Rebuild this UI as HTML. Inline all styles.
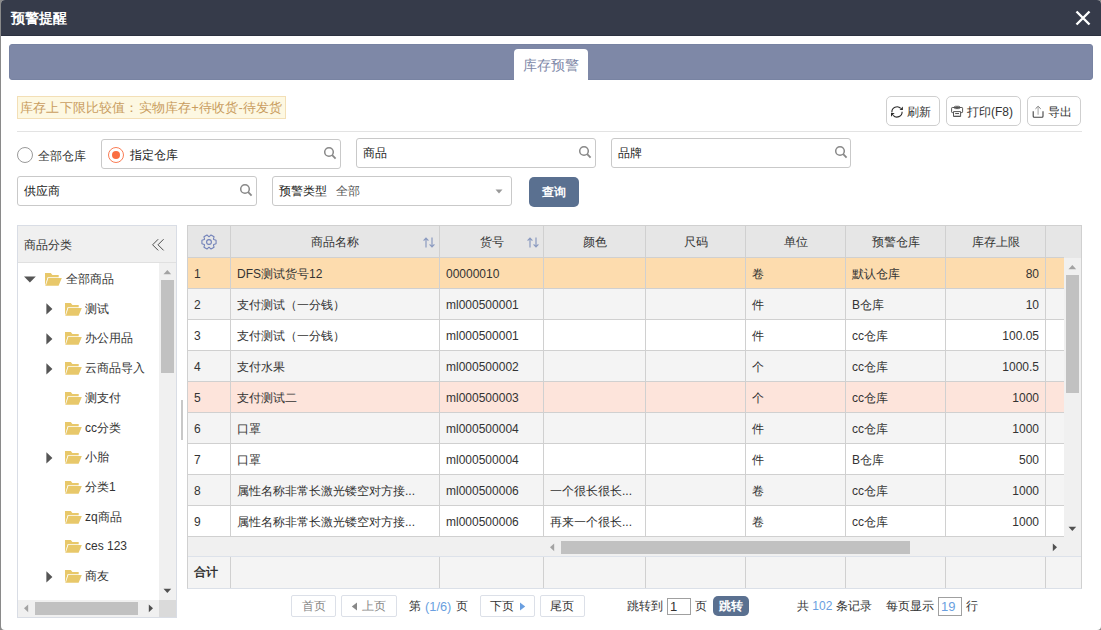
<!DOCTYPE html>
<html><head><meta charset="utf-8">
<style>
*{box-sizing:border-box;margin:0;padding:0}
html,body{width:1101px;height:630px;overflow:hidden}
body{position:relative;background:#8a8a8a;font-family:"Liberation Sans",sans-serif;font-size:12px;color:#333}
.a{position:absolute}
#dlg{left:1px;top:0;width:1100px;height:630px;background:#fff;border-radius:4px}
#title{left:1px;top:0;width:1100px;height:36px;background:#363b4a;border-radius:4px 4px 0 0;border-bottom:1px solid #2c3140}
#title span{position:absolute;left:10px;top:8px;font-size:14px;font-weight:bold;color:#fff;line-height:20px}
#band{left:9px;top:44px;width:1084px;height:36px;background:#7e88a7;border-radius:3px;border:1px solid #7883a2}
#tab{left:514px;top:49px;width:74px;height:31px;background:#fff;border-radius:4px 4px 0 0;color:#7e88a7;font-size:14px;line-height:33px;text-align:center}
#notice{left:17px;top:96px;width:269px;height:23px;background:#fdf8e2;border:1px solid #f3dfb6;color:#c99d60;font-size:13px;line-height:22px;letter-spacing:0.17px;padding-left:2px;white-space:nowrap}
.btn{height:30px;border:1px solid #cfcfcf;border-radius:5px;background:#fff;font-size:12px;color:#333;line-height:28px;white-space:nowrap}
#hr{left:17px;top:131px;width:1065px;height:1px;background:#e3e3e3}
.inp{border:1px solid #c9c9c9;border-radius:3px;background:#fff;height:30px;font-size:12px;line-height:29px;color:#222;padding-left:6px;white-space:nowrap}
.radio{width:16px;height:16px;border-radius:50%;border:1px solid #9a9a9a;background:#fff}
.srch{position:absolute;width:14px;height:14px}
.pb{height:22px;border:1px solid #dce0e8;border-radius:2px;background:#fff}
.qbtn{background:#5a7090;color:#fff;border-radius:5px;text-align:center;font-weight:bold}
</style></head><body>
<div id="dlg" class="a"></div>
<div id="title" class="a"><span>预警提醒</span>
<svg class="a" style="left:1074px;top:10px" width="16" height="16" viewBox="0 0 16 16"><path d="M1.5 1.5L14.5 14.5M14.5 1.5L1.5 14.5" stroke="#fff" stroke-width="2.4" fill="none"/></svg>
</div>
<div id="band" class="a"></div>
<div id="tab" class="a">库存预警</div>
<div id="notice" class="a">库存上下限比较值：实物库存+待收货-待发货</div>

<div class="a btn" style="left:886px;top:96px;width:54px;"></div>
<div class="a" style="left:907px;top:104px;font-size:12px;line-height:17px;color:#333">刷新</div>
<div class="a btn" style="left:946px;top:96px;width:75px;"></div>
<div class="a" style="left:967px;top:104px;font-size:12px;line-height:17px;color:#333">打印(F8)</div>
<div class="a btn" style="left:1027px;top:96px;width:54px;"></div>
<div class="a" style="left:1048px;top:104px;font-size:12px;line-height:17px;color:#333">导出</div>

<svg class="a" style="left:880px;top:96px" width="200" height="30" viewBox="880 96 200 30">
<path d="M891.92 112.34A5.1 5.1 0 0 1 900.79 108.49" stroke="#2a2a2a" stroke-width="1.1" fill="none"/>
<path d="M902.9 106.6V109.9H899.6Z" fill="#2a2a2a"/>
<path d="M902.10 111.72A5.1 5.1 0 0 1 893.21 115.31" stroke="#2a2a2a" stroke-width="1.1" fill="none"/>
<path d="M891 113V116.8L894.6 113Z" fill="#2a2a2a"/>
<rect x="954.3" y="106.3" width="5.6" height="2.3" rx="1.1" stroke="#555" stroke-width="1" fill="none"/>
<path d="M953.4 112.6H952.3Q951.6 112.6 951.6 111.9V108.2Q951.6 107.5 952.3 107.5H961.9Q962.6 107.5 962.6 108.2V111.9Q962.6 112.6 961.9 112.6H960.8" stroke="#555" stroke-width="1" fill="none"/>
<path d="M953.5 111.6H960.6V116.5H953.5Z" stroke="#555" stroke-width="1" fill="none"/>
<path d="M955.2 113.5H959" stroke="#444" stroke-width="0.9"/>
<path d="M954.2 115.4H960" stroke="#bbb" stroke-width="0.9"/>
<path d="M1033.2 111.2V116.2Q1033.2 117.2 1034.2 117.2H1042Q1043 117.2 1043 116.2V111.2" stroke="#444" stroke-width="1.1" fill="none"/>
<path d="M1038.1 107.2V114.8" stroke="#aaa" stroke-width="1.1"/>
<path d="M1035.5 108.8L1038.1 106.3L1040.7 108.8" stroke="#777" stroke-width="1" fill="none"/>
</svg>
<div id="hr" class="a"></div>

<!-- form -->
<div class="a radio" style="left:17px;top:147px"></div>
<div class="a" style="left:38px;top:148px;line-height:17px;color:#333">全部仓库</div>
<div class="a inp" style="left:101px;top:139px;width:240px"></div>
<div class="a radio" style="left:108px;top:147px;border-color:#fa7d55"><div class="a" style="left:3px;top:3px;width:8px;height:8px;border-radius:50%;background:#fa6e42"></div></div>
<div class="a" style="left:130px;top:147px;line-height:17px;color:#222">指定仓库</div>
<svg class="a srch" style="left:323px;top:146px" viewBox="0 0 14 14"><circle cx="6" cy="6" r="4.3" stroke="#888" stroke-width="1.5" fill="none"/><path d="M9.2 9.2L12.6 12.6" stroke="#888" stroke-width="1.8"/></svg>
<div class="a inp" style="left:356px;top:138px;width:240px">商品</div>
<svg class="a srch" style="left:578px;top:145px" viewBox="0 0 14 14"><circle cx="6" cy="6" r="4.3" stroke="#888" stroke-width="1.5" fill="none"/><path d="M9.2 9.2L12.6 12.6" stroke="#888" stroke-width="1.8"/></svg>
<div class="a inp" style="left:611px;top:138px;width:240px">品牌</div>
<svg class="a srch" style="left:834px;top:145px" viewBox="0 0 14 14"><circle cx="6" cy="6" r="4.3" stroke="#888" stroke-width="1.5" fill="none"/><path d="M9.2 9.2L12.6 12.6" stroke="#888" stroke-width="1.8"/></svg>
<div class="a inp" style="left:17px;top:176px;width:240px">供应商</div>
<svg class="a srch" style="left:239px;top:183px" viewBox="0 0 14 14"><circle cx="6" cy="6" r="4.3" stroke="#888" stroke-width="1.5" fill="none"/><path d="M9.2 9.2L12.6 12.6" stroke="#888" stroke-width="1.8"/></svg>
<div class="a inp" style="left:272px;top:176px;width:240px">预警类型<span style="color:#555;margin-left:9px">全部</span></div>
<svg class="a" style="left:495px;top:189px" width="8" height="5" viewBox="0 0 8 5"><path d="M0.5 0.5H7.5L4 4.5Z" fill="#999"/></svg>
<div class="a qbtn" style="left:529px;top:177px;width:50px;height:30px;line-height:30px;font-size:12px">查询</div>


<!-- table -->
<div class="a" style="left:187px;top:225px;width:895px;height:364px;border:1px solid #d0d0d0;border-bottom-color:#dbe0e8;background:#f4f4f4"></div>
<div class="a" style="left:188px;top:226px;width:893px;height:32px;background:#e6e6e6"></div>
<div class="a" style="left:188px;top:257px;width:876px;height:1px;background:#d0d0d0"></div>
<div class="a" style="left:1064px;top:258px;width:17px;height:298px;background:#f0f0f0"></div>
<div class="a" style="left:188px;top:537px;width:893px;height:20px;background:#f0f0f0;border-bottom:1px solid #dde2ea"></div>
<div class="a" style="left:188px;top:258px;width:876px;height:31px;background:#fddcae;border-bottom:1px solid #d0d0d0"></div>
<div class="a" style="left:194px;top:266px;line-height:17px;color:#333;white-space:nowrap">1</div>
<div class="a" style="left:237px;top:266px;line-height:17px;color:#333;white-space:nowrap">DFS测试货号12</div>
<div class="a" style="left:446px;top:266px;line-height:17px;color:#333;white-space:nowrap">00000010</div>
<div class="a" style="left:752px;top:266px;line-height:17px;color:#333;white-space:nowrap">卷</div>
<div class="a" style="left:852px;top:266px;line-height:17px;color:#333;white-space:nowrap">默认仓库</div>
<div class="a" style="left:946px;top:266px;width:93px;text-align:right;line-height:17px;color:#333">80</div>
<div class="a" style="left:188px;top:289px;width:876px;height:31px;background:#f4f4f4;border-bottom:1px solid #d0d0d0"></div>
<div class="a" style="left:194px;top:297px;line-height:17px;color:#333;white-space:nowrap">2</div>
<div class="a" style="left:237px;top:297px;line-height:17px;color:#333;white-space:nowrap">支付测试（一分钱）</div>
<div class="a" style="left:446px;top:297px;line-height:17px;color:#333;white-space:nowrap">ml000500001</div>
<div class="a" style="left:752px;top:297px;line-height:17px;color:#333;white-space:nowrap">件</div>
<div class="a" style="left:852px;top:297px;line-height:17px;color:#333;white-space:nowrap">B仓库</div>
<div class="a" style="left:946px;top:297px;width:93px;text-align:right;line-height:17px;color:#333">10</div>
<div class="a" style="left:188px;top:320px;width:876px;height:31px;background:#ffffff;border-bottom:1px solid #d0d0d0"></div>
<div class="a" style="left:194px;top:328px;line-height:17px;color:#333;white-space:nowrap">3</div>
<div class="a" style="left:237px;top:328px;line-height:17px;color:#333;white-space:nowrap">支付测试（一分钱）</div>
<div class="a" style="left:446px;top:328px;line-height:17px;color:#333;white-space:nowrap">ml000500001</div>
<div class="a" style="left:752px;top:328px;line-height:17px;color:#333;white-space:nowrap">件</div>
<div class="a" style="left:852px;top:328px;line-height:17px;color:#333;white-space:nowrap">cc仓库</div>
<div class="a" style="left:946px;top:328px;width:93px;text-align:right;line-height:17px;color:#333">100.05</div>
<div class="a" style="left:188px;top:351px;width:876px;height:31px;background:#f4f4f4;border-bottom:1px solid #d0d0d0"></div>
<div class="a" style="left:194px;top:359px;line-height:17px;color:#333;white-space:nowrap">4</div>
<div class="a" style="left:237px;top:359px;line-height:17px;color:#333;white-space:nowrap">支付水果</div>
<div class="a" style="left:446px;top:359px;line-height:17px;color:#333;white-space:nowrap">ml000500002</div>
<div class="a" style="left:752px;top:359px;line-height:17px;color:#333;white-space:nowrap">个</div>
<div class="a" style="left:852px;top:359px;line-height:17px;color:#333;white-space:nowrap">cc仓库</div>
<div class="a" style="left:946px;top:359px;width:93px;text-align:right;line-height:17px;color:#333">1000.5</div>
<div class="a" style="left:188px;top:382px;width:876px;height:31px;background:#fde4db;border-bottom:1px solid #d0d0d0"></div>
<div class="a" style="left:194px;top:390px;line-height:17px;color:#333;white-space:nowrap">5</div>
<div class="a" style="left:237px;top:390px;line-height:17px;color:#333;white-space:nowrap">支付测试二</div>
<div class="a" style="left:446px;top:390px;line-height:17px;color:#333;white-space:nowrap">ml000500003</div>
<div class="a" style="left:752px;top:390px;line-height:17px;color:#333;white-space:nowrap">个</div>
<div class="a" style="left:852px;top:390px;line-height:17px;color:#333;white-space:nowrap">cc仓库</div>
<div class="a" style="left:946px;top:390px;width:93px;text-align:right;line-height:17px;color:#333">1000</div>
<div class="a" style="left:188px;top:413px;width:876px;height:31px;background:#f4f4f4;border-bottom:1px solid #d0d0d0"></div>
<div class="a" style="left:194px;top:421px;line-height:17px;color:#333;white-space:nowrap">6</div>
<div class="a" style="left:237px;top:421px;line-height:17px;color:#333;white-space:nowrap">口罩</div>
<div class="a" style="left:446px;top:421px;line-height:17px;color:#333;white-space:nowrap">ml000500004</div>
<div class="a" style="left:752px;top:421px;line-height:17px;color:#333;white-space:nowrap">件</div>
<div class="a" style="left:852px;top:421px;line-height:17px;color:#333;white-space:nowrap">cc仓库</div>
<div class="a" style="left:946px;top:421px;width:93px;text-align:right;line-height:17px;color:#333">1000</div>
<div class="a" style="left:188px;top:444px;width:876px;height:31px;background:#ffffff;border-bottom:1px solid #d0d0d0"></div>
<div class="a" style="left:194px;top:452px;line-height:17px;color:#333;white-space:nowrap">7</div>
<div class="a" style="left:237px;top:452px;line-height:17px;color:#333;white-space:nowrap">口罩</div>
<div class="a" style="left:446px;top:452px;line-height:17px;color:#333;white-space:nowrap">ml000500004</div>
<div class="a" style="left:752px;top:452px;line-height:17px;color:#333;white-space:nowrap">件</div>
<div class="a" style="left:852px;top:452px;line-height:17px;color:#333;white-space:nowrap">B仓库</div>
<div class="a" style="left:946px;top:452px;width:93px;text-align:right;line-height:17px;color:#333">500</div>
<div class="a" style="left:188px;top:475px;width:876px;height:31px;background:#f4f4f4;border-bottom:1px solid #d0d0d0"></div>
<div class="a" style="left:194px;top:483px;line-height:17px;color:#333;white-space:nowrap">8</div>
<div class="a" style="left:237px;top:483px;line-height:17px;color:#333;white-space:nowrap">属性名称非常长激光镂空对方接...</div>
<div class="a" style="left:446px;top:483px;line-height:17px;color:#333;white-space:nowrap">ml000500006</div>
<div class="a" style="left:550px;top:483px;line-height:17px;color:#333;white-space:nowrap">一个很长很长...</div>
<div class="a" style="left:752px;top:483px;line-height:17px;color:#333;white-space:nowrap">卷</div>
<div class="a" style="left:852px;top:483px;line-height:17px;color:#333;white-space:nowrap">cc仓库</div>
<div class="a" style="left:946px;top:483px;width:93px;text-align:right;line-height:17px;color:#333">1000</div>
<div class="a" style="left:188px;top:506px;width:876px;height:31px;background:#ffffff;border-bottom:1px solid #d0d0d0"></div>
<div class="a" style="left:194px;top:514px;line-height:17px;color:#333;white-space:nowrap">9</div>
<div class="a" style="left:237px;top:514px;line-height:17px;color:#333;white-space:nowrap">属性名称非常长激光镂空对方接...</div>
<div class="a" style="left:446px;top:514px;line-height:17px;color:#333;white-space:nowrap">ml000500006</div>
<div class="a" style="left:550px;top:514px;line-height:17px;color:#333;white-space:nowrap">再来一个很长...</div>
<div class="a" style="left:752px;top:514px;line-height:17px;color:#333;white-space:nowrap">卷</div>
<div class="a" style="left:852px;top:514px;line-height:17px;color:#333;white-space:nowrap">cc仓库</div>
<div class="a" style="left:946px;top:514px;width:93px;text-align:right;line-height:17px;color:#333">1000</div>
<div class="a" style="left:230px;top:226px;width:1px;height:311px;background:#d0d0d0"></div>
<div class="a" style="left:230px;top:557px;width:1px;height:31px;background:#d0d0d0"></div>
<div class="a" style="left:439px;top:226px;width:1px;height:311px;background:#d0d0d0"></div>
<div class="a" style="left:439px;top:557px;width:1px;height:31px;background:#d0d0d0"></div>
<div class="a" style="left:543px;top:226px;width:1px;height:311px;background:#d0d0d0"></div>
<div class="a" style="left:543px;top:557px;width:1px;height:31px;background:#d0d0d0"></div>
<div class="a" style="left:645px;top:226px;width:1px;height:311px;background:#d0d0d0"></div>
<div class="a" style="left:645px;top:557px;width:1px;height:31px;background:#d0d0d0"></div>
<div class="a" style="left:745px;top:226px;width:1px;height:311px;background:#d0d0d0"></div>
<div class="a" style="left:745px;top:557px;width:1px;height:31px;background:#d0d0d0"></div>
<div class="a" style="left:845px;top:226px;width:1px;height:311px;background:#d0d0d0"></div>
<div class="a" style="left:845px;top:557px;width:1px;height:31px;background:#d0d0d0"></div>
<div class="a" style="left:945px;top:226px;width:1px;height:311px;background:#d0d0d0"></div>
<div class="a" style="left:945px;top:557px;width:1px;height:31px;background:#d0d0d0"></div>
<div class="a" style="left:1045px;top:226px;width:1px;height:311px;background:#d0d0d0"></div>
<div class="a" style="left:1045px;top:557px;width:1px;height:31px;background:#d0d0d0"></div>
<div class="a" style="left:231px;top:234px;width:208px;text-align:center;line-height:17px;color:#333">商品名称</div>
<div class="a" style="left:440px;top:234px;width:103px;text-align:center;line-height:17px;color:#333">货号</div>
<div class="a" style="left:544px;top:234px;width:101px;text-align:center;line-height:17px;color:#333">颜色</div>
<div class="a" style="left:646px;top:234px;width:99px;text-align:center;line-height:17px;color:#333">尺码</div>
<div class="a" style="left:746px;top:234px;width:99px;text-align:center;line-height:17px;color:#333">单位</div>
<div class="a" style="left:846px;top:234px;width:99px;text-align:center;line-height:17px;color:#333">预警仓库</div>
<div class="a" style="left:946px;top:234px;width:99px;text-align:center;line-height:17px;color:#333">库存上限</div>
<svg class="a" style="left:423px;top:237px" width="12" height="11" viewBox="0 0 12 11"><path d="M3 10.5V1.2M0.6 3.6L3 1.2L5.4 3.6" stroke="#8a9ac0" stroke-width="1.2" fill="none"/><path d="M9 0.5V9.8M6.6 7.4L9 9.8L11.4 7.4" stroke="#8a9ac0" stroke-width="1.2" fill="none"/></svg>
<svg class="a" style="left:527px;top:237px" width="12" height="11" viewBox="0 0 12 11"><path d="M3 10.5V1.2M0.6 3.6L3 1.2L5.4 3.6" stroke="#8a9ac0" stroke-width="1.2" fill="none"/><path d="M9 0.5V9.8M6.6 7.4L9 9.8L11.4 7.4" stroke="#8a9ac0" stroke-width="1.2" fill="none"/></svg>
<svg class="a" style="left:201px;top:234.4px" width="16" height="16" viewBox="0 0 16 16"><path d="M15.08 9.77 L15.08 6.23 L12.72 5.59 L12.44 5.11 L13.07 2.75 L10.01 0.98 L8.28 2.71 L7.72 2.71 L5.99 0.98 L2.93 2.75 L3.56 5.11 L3.28 5.59 L0.92 6.23 L0.92 9.77 L3.28 10.41 L3.56 10.89 L2.93 13.25 L5.99 15.02 L7.72 13.29 L8.28 13.29 L10.01 15.02 L13.07 13.25 L12.44 10.89 L12.72 10.41Z" stroke="#7080b8" stroke-width="1.05" fill="none" stroke-linejoin="round"/><circle cx="8" cy="8" r="2.4" stroke="#7080b8" stroke-width="1.1" fill="none"/></svg>
<svg class="a" style="left:1068px;top:264px" width="9" height="6" viewBox="0 0 9 6"><path d="M0.5 5.2H8.2L4.35 1Z" fill="#a3a3a3"/></svg>
<div class="a" style="left:1066px;top:275px;width:13px;height:118px;background:#c1c1c1"></div>
<svg class="a" style="left:1068px;top:526px" width="9" height="6" viewBox="0 0 9 6"><path d="M0.5 0.8H8.2L4.35 5Z" fill="#505050"/></svg>
<svg class="a" style="left:549px;top:543px" width="6" height="9" viewBox="0 0 6 9"><path d="M5.2 0.5V8.2L1 4.35Z" fill="#a3a3a3"/></svg>
<div class="a" style="left:561px;top:541px;width:349px;height:13px;background:#c1c1c1"></div>
<svg class="a" style="left:1052px;top:543px" width="6" height="9" viewBox="0 0 6 9"><path d="M0.8 0.5V8.2L5 4.35Z" fill="#505050"/></svg>
<div class="a" style="left:194px;top:564px;line-height:17px;color:#333;font-weight:bold">合计</div>
<!-- tree -->
<div class="a" style="left:17px;top:225px;width:160px;height:393px;border:1px solid #d9dde5;background:#fff"></div>
<div class="a" style="left:18px;top:226px;width:158px;height:37px;background:#f0f0f0;border-bottom:1px solid #e0e0e0"></div>
<div class="a" style="left:24px;top:237px;line-height:17px;color:#333">商品分类</div>
<svg class="a" style="left:151px;top:238px" width="14" height="14" viewBox="0 0 14 14"><path d="M7.2 1.2L1.6 6.8L7.2 12.4M12.6 1.2L7 6.8L12.6 12.4" stroke="#444" stroke-width="0.95" fill="none"/></svg>
<div class="a" style="left:159px;top:263px;width:17px;height:337px;background:#f0f0f0"></div>
<svg class="a" style="left:163px;top:269px" width="9" height="6" viewBox="0 0 9 6"><path d="M0.5 5.2H8.2L4.35 1Z" fill="#a3a3a3"/></svg>
<div class="a" style="left:161px;top:280px;width:13px;height:93px;background:#c1c1c1"></div>
<svg class="a" style="left:163px;top:588px" width="9" height="6" viewBox="0 0 9 6"><path d="M0.5 0.8H8.2L4.35 5Z" fill="#505050"/></svg>
<div class="a" style="left:18px;top:600px;width:141px;height:17px;background:#f0f0f0"></div>
<div class="a" style="left:159px;top:600px;width:17px;height:17px;background:#dadada"></div>
<svg class="a" style="left:23px;top:604px" width="6" height="9" viewBox="0 0 6 9"><path d="M5.2 0.5V8.2L1 4.35Z" fill="#a3a3a3"/></svg>
<div class="a" style="left:35px;top:602px;width:103px;height:13px;background:#c1c1c1"></div>
<svg class="a" style="left:148px;top:604px" width="6" height="9" viewBox="0 0 6 9"><path d="M0.8 0.5V8.2L5 4.35Z" fill="#505050"/></svg>
<svg class="a" style="left:24px;top:276.0px" width="12" height="7" viewBox="0 0 12 7"><path d="M0 0.5H11.8L5.9 6.5Z" fill="#555"/></svg>
<svg class="a" style="left:45.4px;top:273.0px" width="17" height="13" viewBox="0 0 17 13"><path d="M0 0H5.8L7.4 1.9H13.7V4.2H2.6L0.3 12.7H0Z" fill="#e8c86a"/><path d="M3.2 4.9H16.8L13.6 12.8H0.4Z" fill="#e8c86a"/><path d="M3.1 4.6L0.6 12.4" stroke="#fff" stroke-width="0.7" opacity="0.8"/></svg>
<div class="a" style="left:66px;top:271.0px;line-height:17px;color:#333;white-space:nowrap">全部商品</div>
<svg class="a" style="left:45.5px;top:303.2px" width="7" height="12" viewBox="0 0 7 12"><path d="M0.4 0.2V11.6L6.4 5.9Z" fill="#555"/></svg>
<svg class="a" style="left:64.7px;top:302.7px" width="17" height="13" viewBox="0 0 17 13"><path d="M0 0H5.8L7.4 1.9H13.7V4.2H2.6L0.3 12.7H0Z" fill="#e8c86a"/><path d="M3.2 4.9H16.8L13.6 12.8H0.4Z" fill="#e8c86a"/><path d="M3.1 4.6L0.6 12.4" stroke="#fff" stroke-width="0.7" opacity="0.8"/></svg>
<div class="a" style="left:85px;top:300.7px;line-height:17px;color:#333;white-space:nowrap">测试</div>
<svg class="a" style="left:45.5px;top:332.9px" width="7" height="12" viewBox="0 0 7 12"><path d="M0.4 0.2V11.6L6.4 5.9Z" fill="#555"/></svg>
<svg class="a" style="left:64.7px;top:332.4px" width="17" height="13" viewBox="0 0 17 13"><path d="M0 0H5.8L7.4 1.9H13.7V4.2H2.6L0.3 12.7H0Z" fill="#e8c86a"/><path d="M3.2 4.9H16.8L13.6 12.8H0.4Z" fill="#e8c86a"/><path d="M3.1 4.6L0.6 12.4" stroke="#fff" stroke-width="0.7" opacity="0.8"/></svg>
<div class="a" style="left:85px;top:330.4px;line-height:17px;color:#333;white-space:nowrap">办公用品</div>
<svg class="a" style="left:45.5px;top:362.6px" width="7" height="12" viewBox="0 0 7 12"><path d="M0.4 0.2V11.6L6.4 5.9Z" fill="#555"/></svg>
<svg class="a" style="left:64.7px;top:362.1px" width="17" height="13" viewBox="0 0 17 13"><path d="M0 0H5.8L7.4 1.9H13.7V4.2H2.6L0.3 12.7H0Z" fill="#e8c86a"/><path d="M3.2 4.9H16.8L13.6 12.8H0.4Z" fill="#e8c86a"/><path d="M3.1 4.6L0.6 12.4" stroke="#fff" stroke-width="0.7" opacity="0.8"/></svg>
<div class="a" style="left:85px;top:360.1px;line-height:17px;color:#333;white-space:nowrap">云商品导入</div>
<svg class="a" style="left:64.7px;top:391.8px" width="17" height="13" viewBox="0 0 17 13"><path d="M0 0H5.8L7.4 1.9H13.7V4.2H2.6L0.3 12.7H0Z" fill="#e8c86a"/><path d="M3.2 4.9H16.8L13.6 12.8H0.4Z" fill="#e8c86a"/><path d="M3.1 4.6L0.6 12.4" stroke="#fff" stroke-width="0.7" opacity="0.8"/></svg>
<div class="a" style="left:85px;top:389.8px;line-height:17px;color:#333;white-space:nowrap">测支付</div>
<svg class="a" style="left:64.7px;top:421.5px" width="17" height="13" viewBox="0 0 17 13"><path d="M0 0H5.8L7.4 1.9H13.7V4.2H2.6L0.3 12.7H0Z" fill="#e8c86a"/><path d="M3.2 4.9H16.8L13.6 12.8H0.4Z" fill="#e8c86a"/><path d="M3.1 4.6L0.6 12.4" stroke="#fff" stroke-width="0.7" opacity="0.8"/></svg>
<div class="a" style="left:85px;top:419.5px;line-height:17px;color:#333;white-space:nowrap">cc分类</div>
<svg class="a" style="left:45.5px;top:451.7px" width="7" height="12" viewBox="0 0 7 12"><path d="M0.4 0.2V11.6L6.4 5.9Z" fill="#555"/></svg>
<svg class="a" style="left:64.7px;top:451.2px" width="17" height="13" viewBox="0 0 17 13"><path d="M0 0H5.8L7.4 1.9H13.7V4.2H2.6L0.3 12.7H0Z" fill="#e8c86a"/><path d="M3.2 4.9H16.8L13.6 12.8H0.4Z" fill="#e8c86a"/><path d="M3.1 4.6L0.6 12.4" stroke="#fff" stroke-width="0.7" opacity="0.8"/></svg>
<div class="a" style="left:85px;top:449.2px;line-height:17px;color:#333;white-space:nowrap">小胎</div>
<svg class="a" style="left:64.7px;top:480.9px" width="17" height="13" viewBox="0 0 17 13"><path d="M0 0H5.8L7.4 1.9H13.7V4.2H2.6L0.3 12.7H0Z" fill="#e8c86a"/><path d="M3.2 4.9H16.8L13.6 12.8H0.4Z" fill="#e8c86a"/><path d="M3.1 4.6L0.6 12.4" stroke="#fff" stroke-width="0.7" opacity="0.8"/></svg>
<div class="a" style="left:85px;top:478.9px;line-height:17px;color:#333;white-space:nowrap">分类1</div>
<svg class="a" style="left:64.7px;top:510.6px" width="17" height="13" viewBox="0 0 17 13"><path d="M0 0H5.8L7.4 1.9H13.7V4.2H2.6L0.3 12.7H0Z" fill="#e8c86a"/><path d="M3.2 4.9H16.8L13.6 12.8H0.4Z" fill="#e8c86a"/><path d="M3.1 4.6L0.6 12.4" stroke="#fff" stroke-width="0.7" opacity="0.8"/></svg>
<div class="a" style="left:85px;top:508.6px;line-height:17px;color:#333;white-space:nowrap">zq商品</div>
<svg class="a" style="left:64.7px;top:540.3px" width="17" height="13" viewBox="0 0 17 13"><path d="M0 0H5.8L7.4 1.9H13.7V4.2H2.6L0.3 12.7H0Z" fill="#e8c86a"/><path d="M3.2 4.9H16.8L13.6 12.8H0.4Z" fill="#e8c86a"/><path d="M3.1 4.6L0.6 12.4" stroke="#fff" stroke-width="0.7" opacity="0.8"/></svg>
<div class="a" style="left:85px;top:538.3px;line-height:17px;color:#333;white-space:nowrap">ces 123</div>
<svg class="a" style="left:45.5px;top:570.5px" width="7" height="12" viewBox="0 0 7 12"><path d="M0.4 0.2V11.6L6.4 5.9Z" fill="#555"/></svg>
<svg class="a" style="left:64.7px;top:570.0px" width="17" height="13" viewBox="0 0 17 13"><path d="M0 0H5.8L7.4 1.9H13.7V4.2H2.6L0.3 12.7H0Z" fill="#e8c86a"/><path d="M3.2 4.9H16.8L13.6 12.8H0.4Z" fill="#e8c86a"/><path d="M3.1 4.6L0.6 12.4" stroke="#fff" stroke-width="0.7" opacity="0.8"/></svg>
<div class="a" style="left:85px;top:568.0px;line-height:17px;color:#333;white-space:nowrap">商友</div>
<div class="a" style="left:181px;top:400px;width:2px;height:40px;background:#c8c8c8"></div>

<!-- pager -->
<div class="a pb" style="left:291px;top:595px;width:45px;"></div>
<div class="a" style="left:302px;top:598px;line-height:17px;color:#888">首页</div>
<div class="a pb" style="left:341px;top:595px;width:56px;"></div>
<svg class="a" style="left:351px;top:602px" width="7" height="9" viewBox="0 0 7 9"><path d="M6 0.5V8.5L0.8 4.5Z" fill="#888"/></svg>
<div class="a" style="left:362px;top:598px;line-height:17px;color:#888">上页</div>
<div class="a" style="left:409px;top:598px;line-height:17px;color:#333">第</div><div class="a" style="left:425px;top:598px;line-height:17px;color:#6a9fe0;font-size:12.8px">(1/6)</div><div class="a" style="left:456px;top:598px;line-height:17px;color:#333">页</div>
<div class="a pb" style="left:480px;top:595px;width:55px;"></div>
<div class="a" style="left:490px;top:598px;line-height:17px;color:#333">下页</div>
<svg class="a" style="left:519px;top:602px" width="7" height="9" viewBox="0 0 7 9"><path d="M1 0.5V8.5L6.2 4.5Z" fill="#6a9fe0"/></svg>
<div class="a pb" style="left:540px;top:595px;width:45px;"></div>
<div class="a" style="left:550px;top:598px;line-height:17px;color:#333">尾页</div>
<div class="a" style="left:627px;top:598px;line-height:17px;color:#333">跳转到</div>
<div class="a" style="left:667px;top:598px;width:24px;height:17px;border:1px solid #a0a0a0;background:#fff"></div>
<div class="a" style="left:670px;top:598px;line-height:17px;color:#333;font-size:13px">1</div>
<div class="a" style="left:695px;top:598px;line-height:17px;color:#333">页</div>
<div class="a qbtn" style="left:713px;top:596px;width:36px;height:20px;line-height:20px;font-size:12px">跳转</div>
<div class="a" style="left:797px;top:598px;line-height:17px;color:#333;white-space:nowrap">共 <span style="color:#6a9fe0">102</span> 条记录</div>
<div class="a" style="left:886px;top:598px;line-height:17px;color:#333;white-space:nowrap">每页显示</div>
<div class="a" style="left:938px;top:597px;width:24px;height:19px;border:1px solid #a0a0a0;background:#fff"></div>
<div class="a" style="left:941px;top:598px;line-height:17px;color:#6a9fe0;font-size:13px">19</div>
<div class="a" style="left:966px;top:598px;line-height:17px;color:#333">行</div>
</body></html>
